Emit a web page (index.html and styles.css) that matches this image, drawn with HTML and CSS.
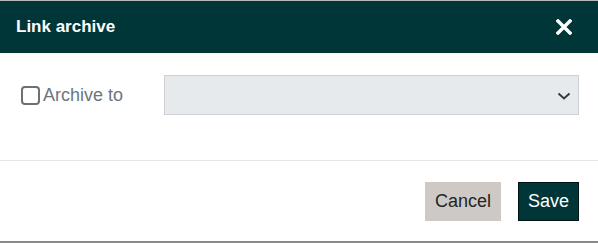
FILE: index.html
```html
<!DOCTYPE html>
<html lang="en">
<head>
    <meta charset="UTF-8">
    <meta name="viewport" content="width=device-width, initial-scale=1.0">
    <title>Link archive</title>
    <link rel="stylesheet" href="styles.css">
</head>
<body>
<div class="modal">
    <div class="modal-header">
        <span class="modal-title">Link archive</span>
        <button class="close-btn" aria-label="Close">
            <svg width="16" height="16" viewBox="0 0 16 16">
                <path d="M2 2 L14 14 M14 2 L2 14" stroke="#fff" stroke-width="3.4" stroke-linecap="square"/>
            </svg>
        </button>
    </div>

    <div class="modal-body">
        <label class="check-label">
            <input type="checkbox" class="check">
            <span>Archive to</span>
        </label>
        <div class="select-wrap">
            <select class="archive-select">
                <option></option>
            </select>
            <svg class="chevron" width="14" height="8" viewBox="0 0 14 8">
                <path d="M1.5 1.5 L7 6.5 L12.5 1.5" fill="none" stroke="#343a40" stroke-width="2"/>
            </svg>
        </div>
    </div>

    <div class="modal-footer">
        <button class="btn btn-cancel">Cancel</button>
        <button class="btn btn-save">Save</button>
    </div>
</div>
</body>
</html>
```

FILE: styles.css
```css
body {
    margin: 0;
    font-family: "Liberation Sans", Arial, sans-serif;
    background: #fff;
}

.modal {
    width: 598px;
    height: 243px;
    box-sizing: border-box;
    border-top: 1px solid #b9b9b9;
    border-bottom: 2px solid #8a8a8a;
    background: #fff;
}

.modal-header {
    height: 52px;
    background: #013638;
    display: flex;
    align-items: center;
    justify-content: space-between;
    padding: 0 26px 0 16px;
}

.modal-title {
    color: #fff;
    font-size: 17px;
    font-weight: bold;
    margin-top: -1px;
}

.close-btn {
    background: none;
    border: none;
    padding: 0;
    width: 16px;
    height: 16px;
    display: flex;
    cursor: pointer;
}

.modal-body {
    display: flex;
    align-items: center;
    padding: 22px 19px 45px 21px;
    border-bottom: 1px solid #e6e6e6;
}

.check-label {
    width: 143px;
    display: flex;
    align-items: center;
    gap: 3px;
    color: #6c757d;
    font-size: 18px;
}

.check {
    appearance: none;
    margin: 0;
    width: 19px;
    height: 19px;
    border: 2px solid #707070;
    border-radius: 4px;
    background: #fff;
}

.select-wrap {
    flex: 1;
    position: relative;
}

.archive-select {
    appearance: none;
    width: 100%;
    height: 40px;
    background: #e7eaed;
    border: 1px solid #cdd1d6;
    border-radius: 0;
    display: block;
    outline: none;
}

.chevron {
    position: absolute;
    right: 8px;
    top: 17px;
    pointer-events: none;
}

.modal-footer {
    display: flex;
    justify-content: flex-end;
    gap: 17px;
    padding: 21px 19px 0 0;
}

.btn {
    height: 39px;
    font-family: "Liberation Sans", Arial, sans-serif;
    font-size: 18px;
    padding: 0 10px;
    border-radius: 0;
    cursor: pointer;
}

.btn-cancel {
    background: #cec9c4;
    border: none;
    color: #212529;
    margin-left: 2px;
}

.btn-save {
    background: #013638;
    border: 1px solid #001515;
    color: #fff;
    padding: 0 9px;
}
```
